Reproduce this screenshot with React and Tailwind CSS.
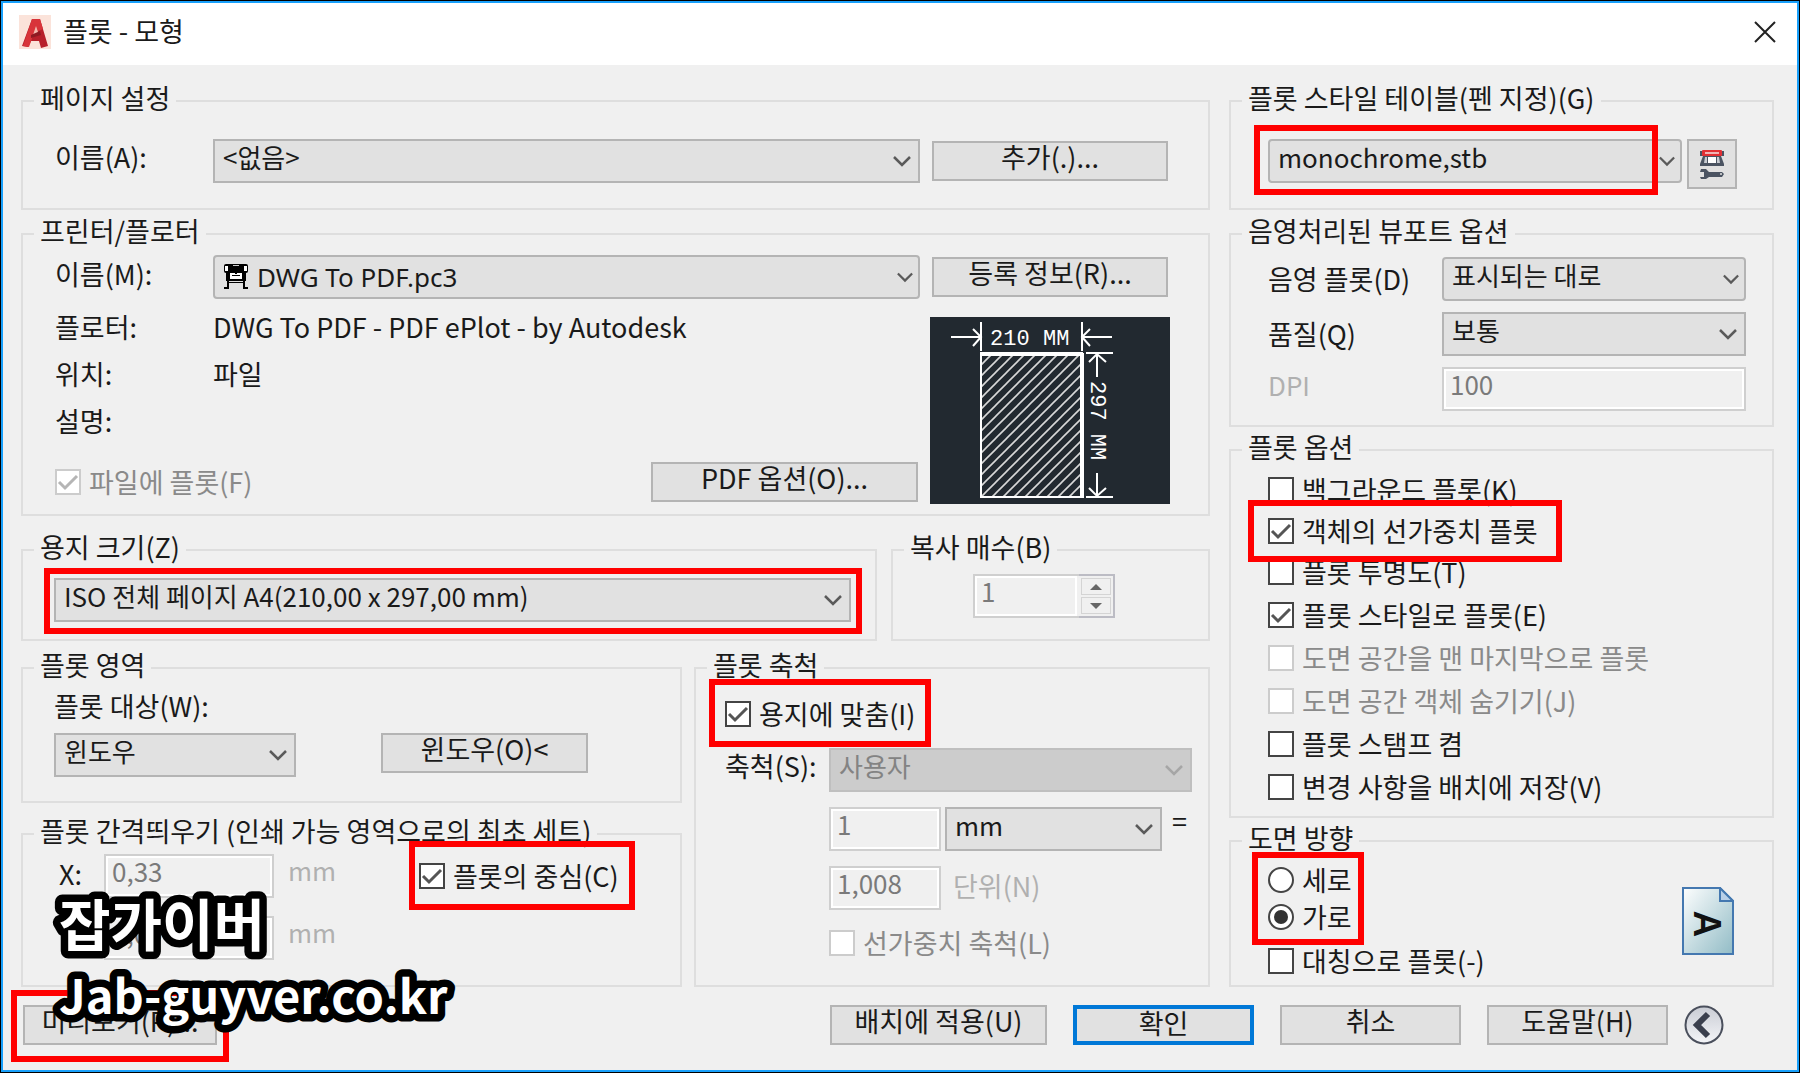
import React, { useState } from 'react';

const CONTROL = 'border-2 border-[#b4b4b4] bg-[#e1e1e1] text-[#1a1a1a]';

const ChevronIcon = ({ className = '' }) => (
    <svg viewBox="0 0 18 12" className={`h-3 ${className}`} fill="none" stroke="currentColor" strokeWidth="2.5">
        <path d="M1 2l8 8 8-8" />
    </svg>
);

const AutocadIcon = () => (
    <svg viewBox="0 0 32 34" className="w-8 h-[34px]">
        <rect width="32" height="34" fill="#fbe3da" />
        <path d="M13 4h8l8 27-7 2-2-7h-8l-3 6-6-1z" fill="#b7202b" />
        <path d="M13 4h8l3 10-9 4-5 14-6-1z" fill="#d8343a" />
        <path d="M17 11l3 9h-6z" fill="#f3b9ae" />
        <path d="M12 20l9-4 1 4-10 3z" fill="#8f1a22" />
    </svg>
);

const PrinterIcon = () => (
    <svg viewBox="0 0 26 26" className="w-[26px] h-[26px]" fill="#000">
        <rect x="1" y="1" width="24" height="9" rx="2" />
        <rect x="2" y="3" width="3" height="5" fill="#fff" />
        <rect x="21" y="3" width="3" height="5" fill="#fff" />
        <rect x="10" y="2" width="6" height="1" fill="#ccc" />
        <path d="M3 9h20v9h-1v6h3v2h-5v-6H6v6H1v-2h3v-6H3z" />
        <rect x="7" y="10" width="12" height="6" fill="#fff" />
        <path d="M9 12h8v1H9zM12 9h2v2h-2z" />
        <rect x="6" y="18" width="14" height="1" fill="#e1e1e1" />
    </svg>
);

const PlotterEditIcon = () => (
    <svg viewBox="0 0 26 30" className="w-[26px] h-[30px]">
        <path d="M4 7h18l3 8v2H1v-2z" fill="#4b5462" />
        <path d="M6 8h2v6H5zM18 8h2l1 6h-3z" fill="#c8ccd2" />
        <rect x="9" y="8" width="8" height="6" fill="#fff" />
        <path d="M1 2h3v5H1zM22 2h3v5h-3z" fill="#4b5462" />
        <rect x="3" y="1" width="20" height="6" rx="1" fill="#e23034" />
        <rect x="6" y="3" width="14" height="2" fill="#f0b4b4" />
        <path d="M2 20h5l3 3h13l2 2-2 3H10l-3 2H2l-1-2h4v-5H1z" fill="#4b5462" />
        <circle cx="22" cy="25" r="1" fill="#e1e1e1" />
    </svg>
);

const LandscapeIcon = () => (
    <svg viewBox="0 0 52 68" className="w-[52px] h-[68px]">
        <defs>
            <linearGradient id="page" x1="0" y1="0" x2="1" y2="1">
                <stop offset="0" stopColor="#fdfefe" />
                <stop offset="1" stopColor="#92bcc6" />
            </linearGradient>
        </defs>
        <path d="M1 1h37l13 13v53H1z" fill="url(#page)" stroke="#4478b0" strokeWidth="2" />
        <path d="M38 1v13h13z" fill="#b9d0e8" stroke="#4478b0" strokeWidth="2" />
        <text transform="translate(12 37) rotate(90)" textAnchor="middle" fontFamily="Noto Sans, sans-serif" fontWeight="600" fontSize="37" fill="#111">
            A
        </text>
    </svg>
);

const CollapseIcon = () => (
    <svg viewBox="0 0 40 40" className="w-10 h-10">
        <defs>
            <linearGradient id="knob" x1="0" y1="0" x2="0" y2="1">
                <stop offset="0" stopColor="#c9ccd4" />
                <stop offset="1" stopColor="#f4f5f8" />
            </linearGradient>
        </defs>
        <circle cx="20" cy="20" r="18.5" fill="url(#knob)" stroke="#4a4f5c" strokeWidth="2" />
        <path d="M24 9L13 20l11 11" fill="none" stroke="#3a3f4d" strokeWidth="6" />
    </svg>
);

const PaperPreview = () => (
    <svg viewBox="0 0 240 187" className="w-60 h-[187px] shrink-0 bg-[#222930]" stroke="#fff" fill="none">
        <defs>
            <pattern id="hatch" width="11" height="11" patternUnits="userSpaceOnUse">
                <path d="M-2 13L13 -2M-2 2l4-4M9 13l4-4" stroke="#d8d8d8" strokeWidth="1.6" />
            </pattern>
        </defs>
        <rect x="51" y="37" width="101" height="143" fill="url(#hatch)" strokeWidth="2" />
        <path d="M50 37h103M152 36v145" strokeWidth="4" />
        <path d="M51 5v29M152 5v29M21 20h29M153 20h29" strokeWidth="2" />
        <path d="M43 12l8 8-8 9M160 12l-8 8 8 9" strokeWidth="2" />
        <path d="M156 36h27M156 180h27M167 37v23M167 156v24" strokeWidth="2" />
        <path d="M159 45l8-8 9 8M159 171l8 8 9-8" strokeWidth="2" />
        <g fill="#fff" stroke="none" fontFamily="Liberation Mono, monospace" fontSize="22">
            <text x="60" y="28">210</text>
            <text x="113" y="28">MM</text>
            <text transform="translate(161 64) rotate(90)">297 MM</text>
        </g>
    </svg>
);

// Red callout frame drawn over the control it surrounds
const Highlight = ({ className }) => (
    <span className={`pointer-events-none absolute z-10 border-[6px] border-[#ff0000] ${className}`} />
);

const Group = ({ title, className = '', children }) => (
    <fieldset className={`min-w-0 border-2 border-[#dedede] ${className}`}>
        <legend className="ml-[11px] px-1.5 h-7 leading-[22px] whitespace-nowrap">{title}</legend>
        {children}
    </fieldset>
);

const Select = ({ id, label, options, className = '', selectClass = '', disabled = false, rounded = false, icon = null }) => (
    <span className={`relative flex h-11 text-[26px] ${className}`}>
        <select
            id={id}
            aria-label={label}
            disabled={disabled}
            className={`w-full h-full appearance-none border-2 pr-10 ${icon ? 'pl-[42px]' : 'pl-2 pb-2'} ${rounded ? 'rounded-[4px]' : ''} ${
                disabled ? 'border-[#bfbfbf] bg-[#cccccc] text-[#838383] opacity-100' : CONTROL
            } ${selectClass}`}
        >
            {options.map((option) => (
                <option key={option}>{option}</option>
            ))}
        </select>
        {icon && <span className="pointer-events-none absolute left-2.5 top-2">{icon}</span>}
        <ChevronIcon
            className={`pointer-events-none absolute top-4 ${rounded ? 'right-[7px] w-4' : 'right-[9px] w-[18px]'} ${
                disabled ? 'text-[#a6a6a6]' : 'text-[#5a5a5a]'
            }`}
        />
    </span>
);

const Button = ({ className = '', children, ...props }) => (
    <button type="button" className={`h-10 pb-2 leading-7 whitespace-nowrap ${className || CONTROL}`} {...props}>
        {children}
    </button>
);

const Field = ({ className = '', ...props }) => (
    <input
        type="text"
        disabled
        className={`h-11 min-w-0 border-2 border-[#cfcfcf] bg-[#f0f0f0] pl-1.5 pb-3 text-[26px] text-[#7a7a7a] outline-2 -outline-offset-4 outline-white ${className}`}
        {...props}
    />
);

const Check = ({ label, type = 'checkbox', checked = false, disabled = false, name }) => {
    const [on, setOn] = useState(checked);
    const isRadio = type === 'radio';

    return (
        <label className={`flex w-fit h-7 items-center gap-2 whitespace-nowrap ${disabled ? 'text-[#8a8a8a]' : ''}`}>
            <span className="relative flex w-[26px] h-[26px] shrink-0">
                <input
                    type={type}
                    name={name}
                    disabled={disabled}
                    defaultChecked={checked}
                    onChange={(e) => setOn(e.target.checked)}
                    className={`peer w-full h-full appearance-none border-2 bg-white ${isRadio ? 'rounded-full' : ''} ${
                        disabled ? 'border-[#cccccc]' : 'border-[#444444]'
                    }`}
                />
                {isRadio ? (
                    <span className="pointer-events-none absolute inset-[6px] hidden rounded-full bg-[#333333] peer-checked:block" />
                ) : (
                    on && (
                        <svg
                            viewBox="0 0 26 26"
                            className="pointer-events-none absolute inset-0"
                            fill="none"
                            stroke={disabled ? '#b5b5b5' : '#555555'}
                            strokeWidth="3"
                        >
                            <path d="M4 13l6 6L22 7" />
                        </svg>
                    )
                )}
            </span>
            {label}
        </label>
    );
};

const PageSetup = () => (
    <Group title="페이지 설정">
        <div className="flex items-center pt-6 pb-[25px] pl-8 pr-10">
            <label htmlFor="setup" className="w-[158px] pb-2">이름(A):</label>
            <Select id="setup" options={['<없음>']} className="flex-1" />
            <Button className={`ml-3 w-[236px] ${CONTROL}`}>추가(.)...</Button>
        </div>
    </Group>
);

const Printer = () => (
    <Group title="프린터/플로터" className="mt-2.5">
        <div className="pt-[7px] pb-2.5 pl-8 pr-[38px]">
            <div className="flex items-center pr-0.5">
                <label htmlFor="printer" className="w-[158px] pb-1.5">이름(M):</label>
                <Select
                    id="printer"
                    options={['DWG To PDF.pc3']}
                    icon={<PrinterIcon />}
                    rounded
                    className="flex-1"
                    selectClass="font-['Noto_Sans',sans-serif]"
                />
                <Button className={`ml-3 w-[236px] ${CONTROL}`}>등록 정보(R)...</Button>
            </div>
            <div className="flex gap-3 pt-3.5">
                <div className="flex-1">
                    <dl className="grid grid-cols-[158px_1fr] gap-y-[19px] leading-7">
                        <dt>플로터:</dt>
                        <dd>DWG To PDF - PDF ePlot - by Autodesk</dd>
                        <dt>위치:</dt>
                        <dd>파일</dd>
                        <dt>설명:</dt>
                        <dd />
                    </dl>
                    <div className="mt-[27px] flex items-center justify-between">
                        <Check label="파일에 플롯(F)" checked disabled />
                        <Button className={`w-[267px] ${CONTROL}`}>PDF 옵션(O)...</Button>
                    </div>
                </div>
                <div className="pt-1">
                    <PaperPreview />
                </div>
            </div>
        </div>
    </Group>
);

const PaperSize = () => (
    <Group title="용지 크기(Z)" className="flex-1">
        <div className="pt-3.5 pb-[17px] pl-[31px] pr-6">
            <div className="relative">
                <Select label="용지 크기" options={['ISO 전체 페이지 A4(210,00 x 297,00 mm)']} selectClass="pl-1.5" />
                <Highlight className="-left-2.5 -right-[11px] -top-2.5 -bottom-3" />
            </div>
        </div>
    </Group>
);

const Copies = () => (
    <Group title="복사 매수(B)" className="w-[319px]">
        <div className="flex pt-2.5 pl-20">
            <Field aria-label="복사 매수" defaultValue="1" className="w-[106px] border-r-0" />
            <div className="flex h-11 w-9 flex-col justify-between border-2 border-l-0 border-[#bcbcc4] p-0.5">
                {['M0 6l6-6 6 6z', 'M0 0l6 6 6-6z'].map((d, i) => (
                    <button
                        key={d}
                        type="button"
                        disabled
                        aria-label={i === 0 ? '증가' : '감소'}
                        className="flex h-[17px] items-center justify-center border border-[#d4d4d4]"
                    >
                        <svg viewBox="0 0 12 6" className="w-3 h-1.5" fill="#666666">
                            <path d={d} />
                        </svg>
                    </button>
                ))}
            </div>
        </div>
    </Group>
);

const PlotArea = () => (
    <Group title="플롯 영역">
        <div className="pt-3 pb-6 pl-[31px]">
            <label htmlFor="area" className="block h-7 leading-6">플롯 대상(W):</label>
            <div className="mt-[11px] flex items-start gap-[85px]">
                <Select id="area" options={['윈도우']} className="w-[242px]" />
                <Button className={`w-[207px] ${CONTROL}`}>윈도우(O)&lt;</Button>
            </div>
        </div>
    </Group>
);

const PlotOffset = () => (
    <Group title="플롯 간격띄우기 (인쇄 가능 영역으로의 최초 세트)" className="mt-[17px]">
        <div className="flex flex-col gap-[18px] pt-1.5 pb-[25px] pl-9">
            <div className="flex items-center">
                <label htmlFor="offset-x" className="w-[45px] pb-1">X:</label>
                <Field id="offset-x" defaultValue="0,33" className="w-[170px]" />
                <span className="ml-3.5 w-[131px] pb-3 text-[26px] text-[#b0b0b0]">mm</span>
                <span className="relative">
                    <Check label="플롯의 중심(C)" checked />
                    <Highlight className="-left-2.5 -right-4 -top-[21px] -bottom-5" />
                </span>
            </div>
            <div className="flex items-center">
                <label htmlFor="offset-y" className="w-[45px] pb-1">Y:</label>
                <Field id="offset-y" defaultValue="1,00" className="w-[170px]" />
                <span className="ml-3.5 pb-3 text-[26px] text-[#b0b0b0]">mm</span>
            </div>
        </div>
    </Group>
);

const PlotScale = () => (
    <Group title="플롯 축척" className="w-[516px]">
        <div className="pt-[18px] pl-[29px] pr-4">
            <div className="relative w-fit">
                <Check label="용지에 맞춤(I)" checked />
                <Highlight className="-inset-x-4 -top-[21px] -bottom-[19px]" />
            </div>
            <div className="mt-5 grid grid-cols-[104px_112px_1fr_30px] items-center gap-y-[15px]">
                <label htmlFor="scale" className="pb-2">축척(S):</label>
                <Select id="scale" options={['사용자']} disabled className="col-span-3" />
                <Field aria-label="축척 값" defaultValue="1" className="col-start-2" />
                <Select label="단위" options={['mm']} className="ml-1" />
                <span className="pl-2.5 pb-4 leading-6">=</span>
                <Field id="units" defaultValue="1,008" className="col-start-2" />
                <label htmlFor="units" className="pl-3 pb-1 text-[#b0b0b0]">단위(N)</label>
                <div className="col-span-3 col-start-2 mt-1">
                    <Check label="선가중치 축척(L)" disabled />
                </div>
            </div>
        </div>
    </Group>
);

const StyleTable = () => (
    <Group title="플롯 스타일 테이블(펜 지정)(G)">
        <div className="flex items-start gap-[5px] pt-6 pb-[19px] pl-[37px] pr-[35px]">
            <div className="relative flex-1">
                <Select label="플롯 스타일 테이블" options={['monochrome,stb']} rounded selectClass="pl-1.5" />
                <Highlight className="-left-3.5 right-6 -top-3.5 -bottom-3" />
            </div>
            <button type="button" aria-label="편집" className={`flex w-[50px] h-[50px] items-center justify-center ${CONTROL}`}>
                <PlotterEditIcon />
            </button>
        </div>
    </Group>
);

const ShadedViewport = () => (
    <Group title="음영처리된 뷰포트 옵션" className="mt-2.5">
        <div className="grid grid-cols-[174px_1fr] items-center gap-y-[11px] pt-[9px] pb-3.5 pl-[37px] pr-[26px]">
            <label htmlFor="shade">음영 플롯(D)</label>
            <Select id="shade" options={['표시되는 대로']} rounded />
            <label htmlFor="quality">품질(Q)</label>
            <Select id="quality" options={['보통']} />
            <label htmlFor="dpi" className="pb-2 text-[26px] text-[#b0b0b0]">DPI</label>
            <Field id="dpi" defaultValue="100" />
        </div>
    </Group>
);

const PlotOptions = () => (
    <Group title="플롯 옵션" className="mt-[9px]">
        <div className="pt-3 pb-[15px] pl-[37px]">
            <div className="flex flex-col gap-[13px]">
                <Check label="백그라운드 플롯(K)" />
                <span className="relative w-fit">
                    <Check label="객체의 선가중치 플롯" checked />
                    <Highlight className="-left-5 -right-6 -inset-y-[17px]" />
                </span>
                <Check label="플롯 투명도(T)" />
            </div>
            <div className="mt-[15px] flex flex-col gap-[15px]">
                <Check label="플롯 스타일로 플롯(E)" checked />
                <Check label="도면 공간을 맨 마지막으로 플롯" disabled />
                <Check label="도면 공간 객체 숨기기(J)" disabled />
                <Check label="플롯 스탬프 켬" />
                <Check label="변경 사항을 배치에 저장(V)" />
            </div>
        </div>
    </Group>
);

const Orientation = () => (
    <Group title="도면 방향" className="mt-[9px]">
        <div className="flex items-center justify-between pt-[11px] pb-2.5 pl-[37px] pr-[38px]">
            <div>
                <div className="relative flex w-fit flex-col gap-[9px]">
                    <Check type="radio" name="orientation" label="세로" />
                    <Check type="radio" name="orientation" label="가로" checked />
                    <Highlight className="-left-4 -right-3 -inset-y-3.5" />
                </div>
                <div className="mt-4">
                    <Check label="대칭으로 플롯(-)" />
                </div>
            </div>
            <LandscapeIcon />
        </div>
    </Group>
);

const Watermark = () => (
    <svg
        viewBox="0 0 420 190"
        className="pointer-events-none absolute left-[50px] bottom-[13px] z-20 w-[420px] h-[190px]"
        fill="#fff"
        stroke="#000"
        strokeWidth="15"
        strokeLinejoin="round"
        paintOrder="stroke"
        fontFamily="Noto Sans CJK KR, sans-serif"
        fontWeight="700"
    >
        <text x="9" y="76" fontSize="56">잡가이버</text>
        <text x="9" y="144" fontSize="47">Jab-guyver.co.kr</text>
    </svg>
);

export default function App() {
    return (
        <div className="relative min-h-screen bg-black p-px font-['Noto_Sans_CJK_KR',sans-serif] text-[27px] leading-8 text-[#1a1a1a]">
            <div className="border-2 border-[#18a0fb] bg-[#f0f0f0]">
                <header className="flex h-[62px] items-center bg-white pb-1 pl-4 pr-5">
                    <AutocadIcon />
                    <h1 className="ml-3 pb-0.5">플롯 - 모형</h1>
                    <button type="button" aria-label="닫기" className="ml-auto">
                        <svg viewBox="0 0 24 24" className="w-6 h-6" stroke="#222" strokeWidth="2">
                            <path d="M2 2l20 20M22 2L2 22" />
                        </svg>
                    </button>
                </header>

                <main className="grid grid-cols-[1fr_545px] gap-[19px] pt-[22px] pl-[18px] pr-[23px]">
                    <div>
                        <PageSetup />
                        <Printer />
                        <div className="mt-5 flex gap-3.5">
                            <PaperSize />
                            <Copies />
                        </div>
                        <div className="mt-[13px] flex gap-3">
                            <div className="min-w-0 flex-1">
                                <PlotArea />
                                <PlotOffset />
                            </div>
                            <PlotScale />
                        </div>
                    </div>
                    <div>
                        <StyleTable />
                        <ShadedViewport />
                        <PlotOptions />
                        <Orientation />
                    </div>
                </main>

                <footer className="flex items-center pt-[18px] pb-[25px] pl-5 pr-[73px]">
                    <div className="relative">
                        <Button className={`w-[194px] ${CONTROL}`}>미리보기(P)...</Button>
                        <Highlight className="-inset-x-3 -top-[15px] -bottom-[17px]" />
                    </div>
                    <div className="ml-auto flex items-center gap-[26px]">
                        <Button className={`w-[217px] ${CONTROL}`}>배치에 적용(U)</Button>
                        <Button className="w-[181px] border-4 border-[#0078d7] bg-[#e1e1e1]">확인</Button>
                        <Button className={`w-[181px] ${CONTROL}`}>취소</Button>
                        <Button className={`w-[181px] ${CONTROL}`}>도움말(H)</Button>
                    </div>
                    <button type="button" aria-label="접기" className="ml-4">
                        <CollapseIcon />
                    </button>
                </footer>
            </div>
            <Watermark />
        </div>
    );
}
